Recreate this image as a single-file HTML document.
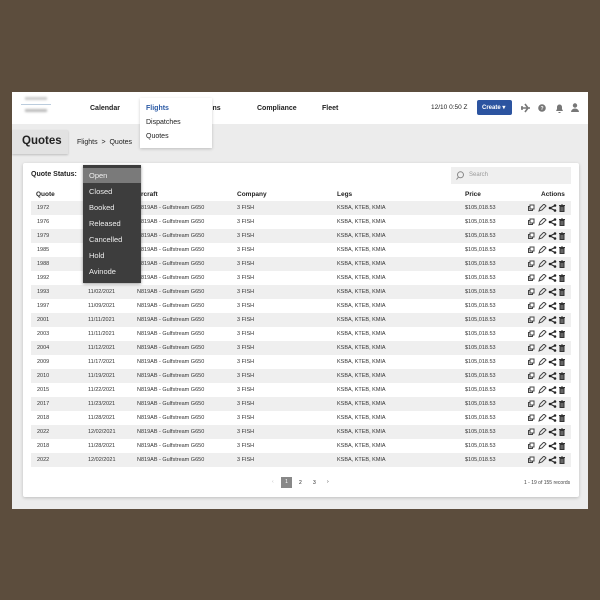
<!DOCTYPE html>
<html><head><style>
*{margin:0;padding:0;box-sizing:border-box}
body{width:600px;height:600px;background:#5c4d3d;font-family:"Liberation Sans",sans-serif;position:relative;overflow:hidden;color:#222}
.a{position:absolute}
#app{left:12px;top:92px;width:576px;height:417px;background:#ececec}
#hdr{left:12px;top:92px;width:576px;height:32px;background:#fff}
.nav{font-size:7px;font-weight:bold;top:105px}
#card{left:23px;top:163px;width:556px;height:334px;background:#fff;box-shadow:0 1px 3px rgba(0,0,0,.2);border-radius:2px}
.row{position:absolute;left:31px;width:540px;height:14px;font-size:5.5px;color:#333}
.row span{position:absolute;top:4px}
.s{background:#efefef}
.ic{position:absolute;top:3px;left:496px}
.th{font-size:6.5px;font-weight:bold;top:191px}
.dd{left:83px;top:165px;width:58px;height:118px;background:#3d3d3d;box-shadow:0 1px 3px rgba(0,0,0,.4)}
.dd div{position:absolute;left:6px;font-size:7.5px;color:#eee}
</style></head><body>
<div id="app" class="a"></div>
<div id="hdr" class="a"></div>
<div class="a" style="left:25px;top:97px;width:22px;height:3px;background:#ccc;filter:blur(1px)"></div>
<div class="a" style="left:21px;top:104px;width:30px;height:1px;background:#bcd"></div>
<div class="a" style="left:25px;top:109px;width:22px;height:3px;background:#bbb;filter:blur(1px)"></div>
<div class="a nav" style="left:90px">Calendar</div>
<div class="a nav" style="left:200px">ations</div>
<div class="a nav" style="left:257px">Compliance</div>
<div class="a nav" style="left:322px">Fleet</div>
<div class="a" style="left:140px;top:98px;width:72px;height:50px;background:#fff;box-shadow:0 1px 3px rgba(0,0,0,.2)"></div>
<div class="a nav" style="left:146px;color:#2b5aa5">Flights</div>
<div class="a" style="left:146px;top:119px;font-size:7px">Dispatches</div>
<div class="a" style="left:146px;top:133px;font-size:7px">Quotes</div>
<div class="a" style="left:431px;top:104px;font-size:6.5px">12/10 0:50 Z</div>
<div class="a" style="left:477px;top:100px;width:35px;height:15px;background:#2c54a0;border-radius:2px;color:#fff;font-size:6px;font-weight:bold;padding:4px 0 0 5px">Create ▾</div>
<svg class="a" style="left:520px;top:102px" width="60" height="12" viewBox="0 0 60 12" fill="#777">
<path d="M1 6h9M5 2l3 4-3 4M2 4v4" stroke="#777" stroke-width="1.6" fill="none"/>
<circle cx="22" cy="6" r="3.8"/><text x="22" y="8" font-size="5" fill="#fff" text-anchor="middle" font-family="Liberation Sans" font-weight="bold">?</text>
<path d="M36 9h7l-1-2V5a2.5 2.5 0 0 0-5 0v2zM38.5 10h2v1h-2z"/>
<circle cx="55" cy="3.5" r="2.2"/><path d="M51 10a4 3.5 0 0 1 8 0z"/>
</svg>
<div class="a" style="left:12px;top:130px;width:56px;height:24px;background:#e2e2e2;box-shadow:0 1px 2px rgba(0,0,0,.2)"></div>
<div class="a" style="left:22px;top:135px;font-size:11.5px;font-weight:bold">Quotes</div>
<div class="a" style="left:77px;top:139px;font-size:7px">Flights &nbsp;&gt;&nbsp; Quotes</div>
<div id="card" class="a"></div>
<div class="a" style="left:31px;top:171px;font-size:7px;font-weight:bold">Quote Status:</div>
<div class="a" style="left:451px;top:167px;width:120px;height:17px;background:#efefef"></div>
<svg class="a" style="left:456px;top:171px" width="9" height="9"><circle cx="4.5" cy="3.8" r="3" stroke="#888" fill="none"/><path d="M2.5 6l-2 2.5" stroke="#888"/></svg>
<div class="a" style="left:469px;top:172px;font-size:6px;color:#999">Search</div>
<div class="a th" style="left:36px">Quote</div>
<div class="a th" style="left:141px">rcraft</div>
<div class="a th" style="left:237px">Company</div>
<div class="a th" style="left:337px">Legs</div>
<div class="a th" style="left:465px">Price</div>
<div class="a th" style="left:541px">Actions</div>
<div id="rows"></div>
<script>
var q=["1972","1976","1979","1985","1988","1992","1993","1997","2001","2003","2004","2009","2010","2015","2017","2018","2022","2018","2022"];
var d=["","","","","","","11/02/2021","11/09/2021","11/11/2021","11/11/2021","11/12/2021","11/17/2021","11/19/2021","11/22/2021","11/23/2021","11/28/2021","12/02/2021","11/28/2021","12/02/2021"];
var ic='<svg class="ic" width="40" height="8" viewBox="0 0 40 8"><rect x="1.5" y="2.5" width="4" height="4" fill="none" stroke="#444"/><rect x="3" y="1" width="4" height="4" fill="#fff" stroke="#444"/><path d="M12 7l1-3 4-4 2 2-4 4z" fill="none" stroke="#444"/><circle cx="28" cy="1.5" r="1.3" fill="#222"/><circle cx="23" cy="4" r="1.3" fill="#222"/><circle cx="28" cy="6.5" r="1.3" fill="#222"/><path d="M28 1.5L23 4l5 2.5" stroke="#222" fill="none"/><path d="M32 1.5h6M34 1h2M33 2.5h4v5h-4z" stroke="#333" fill="#666"/></svg>';
var h="";
for(var i=0;i<19;i++){h+='<div class="row'+(i%2==0?' s':'')+'" style="top:'+(201+i*14)+'px"><span style="left:6px">'+q[i]+'</span><span style="left:57px">'+d[i]+'</span><span style="left:106px">N819AB - Gulfstream G650</span><span style="left:206px">3 FISH</span><span style="left:306px">KSBA, KTEB, KMIA</span><span style="left:434px">$105,018.53</span>'+ic+'</div>';}
document.getElementById("rows").innerHTML=h;
</script>
<div class="a dd"><div style="left:0;top:3px;width:58px;height:15px;background:#7a7a7a"></div>
<div style="top:6px">Open</div><div style="top:22px">Closed</div><div style="top:38px">Booked</div><div style="top:54px">Released</div><div style="top:70px">Cancelled</div><div style="top:86px">Hold</div><div style="top:102px">Avinode</div></div>
<div class="a" style="left:272px;top:479px;font-size:5px;color:#bbb">‹</div>
<div class="a" style="left:281px;top:477px;width:11px;height:11px;background:#888;color:#fff;font-size:5px;text-align:center;line-height:11px">1</div>
<div class="a" style="left:299px;top:480px;font-size:5px">2</div>
<div class="a" style="left:313px;top:480px;font-size:5px">3</div>
<div class="a" style="left:327px;top:479px;font-size:5px">›</div>
<div class="a" style="left:524px;top:480px;font-size:5px;color:#444">1 - 19 of 155 records</div>
</body></html>
